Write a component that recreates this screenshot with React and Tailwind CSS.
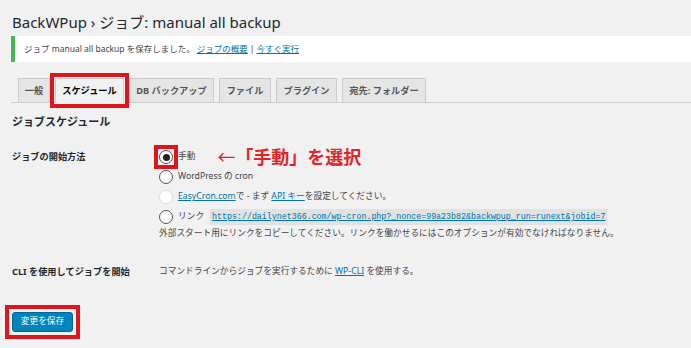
import React from 'react';

const tabs = [
  { label: '一般', w: 'w-[32px]' },
  { label: 'スケジュール', w: 'w-[69px]', active: true },
  { label: 'DB バックアップ', w: 'w-[85px]' },
  { label: 'ファイル', w: 'w-[52px]' },
  { label: 'プラグイン', w: 'w-[61px]' },
  { label: '宛先: フォルダー', w: 'w-[84px]' },
];

function Radio({ checked, disabled }) {
  return (
    <span
      className={`flex h-[14px] w-[14px] shrink-0 items-center justify-center rounded-full border bg-white ${
        disabled ? 'border-[#dcdcdc]' : 'border-[#555]'
      }`}
    >
      {checked && <span className="h-[7px] w-[7px] rounded-full bg-[#222]" />}
    </span>
  );
}

export default function App() {
  return (
    <div className="h-[348px] w-full overflow-hidden bg-[#f1f1f1] pl-[11px] pt-[9px] font-['Noto_Sans','Noto_Sans_CJK_JP',sans-serif] text-[#444]">
      <h1 className="h-[27px] pl-px text-[15px] leading-[27px] text-[#23282d]">
        BackWPup › ジョブ: manual all backup
      </h1>

      {/* saved notice */}
      <div className="flex h-[26px] items-center border-l-4 border-[#46b450] bg-white pl-[9px] text-[8.5px] text-[#444]">
        <span>ジョブ manual all backup を保存しました。</span>
        <a className="ml-[2px] text-[#0073aa] underline">ジョブの概要</a>
        <span className="mx-[2px]">|</span>
        <a className="text-[#0073aa] underline">今すぐ実行</a>
      </div>

      {/* tabs */}
      <div className="mt-[16px] flex h-[25px] items-end gap-[5px] border-b border-[#ccc] pl-[7px]">
        {tabs.map(tab => (
          <div
            key={tab.label}
            className={`${tab.w} -mb-px flex h-[25px] shrink-0 items-center justify-center border border-[#ccc] text-[9.2px] font-bold ${
              tab.active
                ? 'border-b-[#f1f1f1] bg-[#f1f1f1] text-[#000] outline-4 outline-[#e0141c] outline-offset-[1px]'
                : 'bg-[#e5e5e5] text-[#555]'
            }`}
          >
            {tab.label}
          </div>
        ))}
      </div>

      <h2 className="mt-[9px] h-[20px] pl-px text-[11px] font-bold leading-[20px] text-[#23282d]">
        ジョブスケジュール
      </h2>

      {/* start method */}
      <div className="mt-[15px] flex">
        <div className="flex h-[20px] w-[148px] shrink-0 items-center pl-px text-[9.2px] font-bold text-[#23282d]">
          ジョブの開始方法
        </div>
        <div className="flex flex-col text-[8.7px]">
          <div className="flex h-[20px] items-center">
            <span className="-mx-[5px] -my-[5px] flex border-4 border-[#e0141c] p-px">
              <Radio checked />
            </span>
            <span className="ml-[5px]">手動</span>
            <span className="ml-[22px] text-[18px] font-bold text-[#e0242a]">
              <span className="font-normal">←</span>「手動」を選択
            </span>
          </div>
          <div className="flex h-[20px] items-center">
            <Radio />
            <span className="ml-[5px]">WordPress の cron</span>
          </div>
          <div className="flex h-[20px] items-center">
            <Radio disabled />
            <span className="ml-[5px]">
              <a className="text-[#0073aa] underline">EasyCron.com</a>で - まず{' '}
              <a className="text-[#0073aa] underline">API キー</a>を設定してください。
            </span>
          </div>
          <div className="flex h-[20px] items-center">
            <Radio />
            <span className="ml-[5px]">リンク</span>
            <code className="ml-[6px] bg-[#e2e2e2] px-[2px] py-[2px] font-['Liberation_Mono',monospace] text-[8.3px] text-[#0073aa] underline">
              https://dailynet366.com/wp-cron.php?_nonce=99a23b82&amp;backwpup_run=runext&amp;jobid=7
            </code>
          </div>
          <div className="flex h-[13px] items-center">
            外部スタート用にリンクをコピーしてください。リンクを働かせるにはこのオプションが有効でなければなりません。
          </div>
        </div>
      </div>

      {/* CLI */}
      <div className="mt-[22px] flex h-[20px] items-center">
        <div className="w-[148px] shrink-0 pl-px text-[9.2px] font-bold text-[#23282d]">
          CLI を使用してジョブを開始
        </div>
        <div className="text-[8.7px]">
          コマンドラインからジョブを実行するために <a className="text-[#0073aa] underline">WP-CLI</a> を使用する。
        </div>
      </div>

      <div className="-ml-[6px] mt-[23px] inline-flex border-4 border-[#e0141c] p-[3px]">
        <button className="h-[20px] w-[61px] rounded-[3px] border border-[#006799] bg-[#0085ba] text-[8.7px] text-white">
          変更を保存
        </button>
      </div>
    </div>
  );
}
